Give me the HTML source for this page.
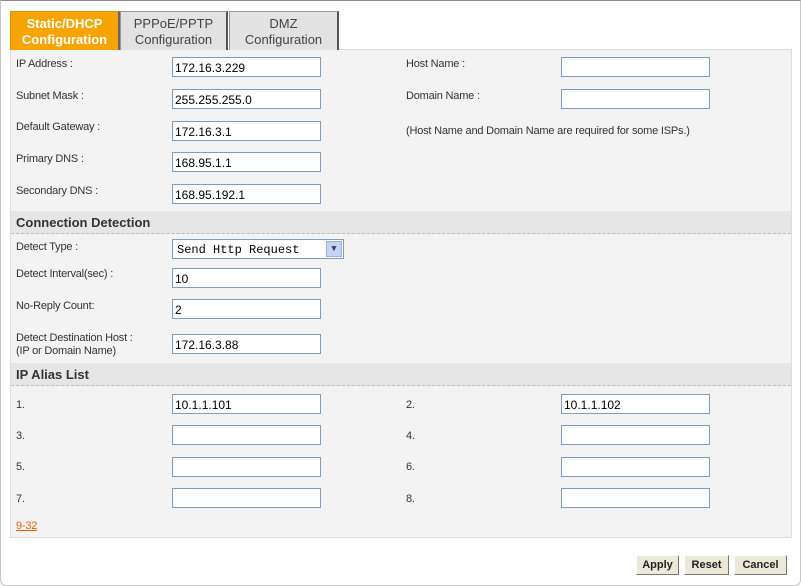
<!DOCTYPE html>
<html><head><meta charset="utf-8"><style>
*{margin:0;padding:0;box-sizing:border-box}
body{width:801px;height:586px;background:#fff;font-family:"Liberation Sans",Arial,sans-serif;font-size:11px;color:#333;position:relative;overflow:hidden}
.frame{position:absolute;left:0;top:0;width:801px;height:586px;border:1px solid #c8c8c8;border-top:1px solid #888;border-radius:0 0 6px 6px}
.panel{position:absolute;left:10px;top:49px;width:782px;height:489px;background:#f3f3f3;border:1px solid #ddd}
.tab{position:absolute;top:11px;height:39px;text-align:center;font-size:13px;line-height:16px;padding-top:4px;border:1px solid #999;border-bottom:none}
.t1{left:10px;width:110px;background:#f7a400;color:#fff;font-weight:bold;border-color:#e09000;border-right:2px solid #666}
.t2{left:120px;width:108px;background:#e2e2e2;color:#444;border-right:2px solid #555}
.t3{left:229px;width:110px;background:#e2e2e2;color:#444;border-right:2px solid #555}
.l{position:absolute;font-size:11px;color:#333;line-height:13px;letter-spacing:-0.2px}
.i{position:absolute;width:149px;height:20px;background:#fff;border:1px solid #7f9db9;font-size:12px;padding:3px 0 0 2px;color:#000}
.h{position:absolute;left:11px;width:780px;height:23px;background:#e6e6e6;border-bottom:1px dashed #bbb;font-weight:bold;font-size:13px;padding:4px 0 0 5px;color:#333}
.sel{position:absolute;left:172px;top:239px;width:172px;height:20px;background:#fff;border:1px solid #7f9db9;font-family:"Liberation Mono",monospace;font-size:12px;padding:3px 0 0 4px;color:#000}
.arr{position:absolute;right:1px;top:1px;width:16px;height:16px;background:#c4d3f6;border:1px solid #9db1e0;color:#345;font-size:9px;text-align:center;line-height:15px}
.b{position:absolute;top:555px;height:20px;background:#ece9d8;border:1px solid #888;border-color:#fff #777 #777 #fff;font-weight:bold;font-size:11px;text-align:center;line-height:18px;color:#222}
</style></head><body>
<div class="frame"></div>
<div class="panel"></div>
<div class="tab t1">Static/DHCP<br>Configuration</div>
<div class="tab t2">PPPoE/PPTP<br>Configuration</div>
<div class="tab t3">DMZ<br>Configuration</div>

<div class="l" style="left:16px;top:58px">IP Address :</div><div class="i" style="left:172px;top:57px">172.16.3.229</div>
<div class="l" style="left:16px;top:90px">Subnet Mask :</div><div class="i" style="left:172px;top:89px">255.255.255.0</div>
<div class="l" style="left:16px;top:121px">Default Gateway :</div><div class="i" style="left:172px;top:121px">172.16.3.1</div>
<div class="l" style="left:16px;top:153px">Primary DNS :</div><div class="i" style="left:172px;top:152px">168.95.1.1</div>
<div class="l" style="left:16px;top:185px">Secondary DNS :</div><div class="i" style="left:172px;top:184px">168.95.192.1</div>

<div class="l" style="left:406px;top:58px">Host Name :</div><div class="i" style="left:561px;top:57px"></div>
<div class="l" style="left:406px;top:90px">Domain Name :</div><div class="i" style="left:561px;top:89px"></div>
<div class="l" style="left:406px;top:125px">(Host Name and Domain Name are required for some ISPs.)</div>

<div class="h" style="top:211px">Connection Detection</div>
<div class="l" style="left:16px;top:241px">Detect Type :</div>
<div class="sel">Send Http Request<div class="arr">&#9660;</div></div>
<div class="l" style="left:16px;top:268px">Detect Interval(sec) :</div><div class="i" style="left:172px;top:268px">10</div>
<div class="l" style="left:16px;top:300px">No-Reply Count:</div><div class="i" style="left:172px;top:299px">2</div>
<div class="l" style="left:16px;top:332px">Detect Destination Host :<br>(IP or Domain Name)</div><div class="i" style="left:172px;top:334px">172.16.3.88</div>

<div class="h" style="top:363px">IP Alias List</div>
<div class="l" style="left:16px;top:399px">1.</div><div class="i" style="left:172px;top:394px">10.1.1.101</div>
<div class="l" style="left:406px;top:399px">2.</div><div class="i" style="left:561px;top:394px">10.1.1.102</div>
<div class="l" style="left:16px;top:430px">3.</div><div class="i" style="left:172px;top:425px"></div>
<div class="l" style="left:406px;top:430px">4.</div><div class="i" style="left:561px;top:425px"></div>
<div class="l" style="left:16px;top:461px">5.</div><div class="i" style="left:172px;top:457px"></div>
<div class="l" style="left:406px;top:461px">6.</div><div class="i" style="left:561px;top:457px"></div>
<div class="l" style="left:16px;top:493px">7.</div><div class="i" style="left:172px;top:488px"></div>
<div class="l" style="left:406px;top:493px">8.</div><div class="i" style="left:561px;top:488px"></div>
<div class="l" style="left:16px;top:520px;color:#f06000;text-decoration:underline">9-32</div>

<div class="b" style="left:636px;width:43px">Apply</div>
<div class="b" style="left:684px;width:45px">Reset</div>
<div class="b" style="left:734px;width:53px">Cancel</div>
</body></html>
